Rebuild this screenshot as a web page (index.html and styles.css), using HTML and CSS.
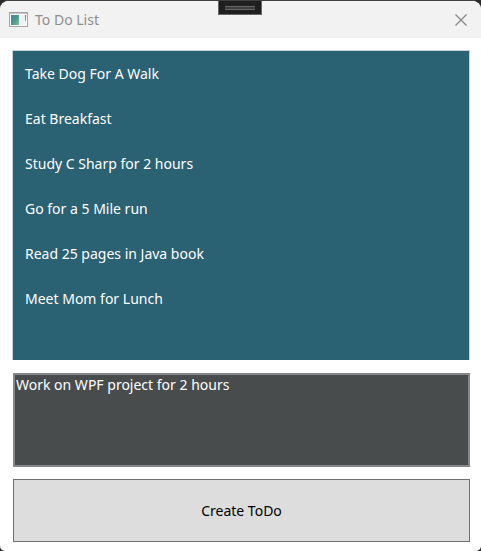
FILE: index.html
```html
<!DOCTYPE html>
<html lang="en">
<head>
<meta charset="utf-8">
<meta name="viewport" content="width=device-width, initial-scale=1">
<title>To Do List</title>
<link rel="stylesheet" href="styles.css">
</head>
<body>
<div class="window">
  <header class="titlebar">
    <svg class="app-icon" width="19" height="15" viewBox="0 0 19 15" aria-hidden="true">
      <defs>
        <linearGradient id="pane" x1="0" y1="0" x2="1" y2="1">
          <stop offset="0" stop-color="#4a7fae"/>
          <stop offset="0.5" stop-color="#4c9a90"/>
          <stop offset="1" stop-color="#7dbd92"/>
        </linearGradient>
        <linearGradient id="strip" x1="0" y1="0" x2="0" y2="1">
          <stop offset="0" stop-color="#4a80c0"/>
          <stop offset="1" stop-color="#75bd80"/>
        </linearGradient>
      </defs>
      <rect x="0.5" y="0.5" width="18" height="14" fill="#fafafa" stroke="#a5a7aa"/>
      <path d="M1 1.5h17" stroke="#c2c6ca"/>
      <rect x="2" y="3" width="8" height="10" fill="url(#pane)"/>
      <rect x="11" y="3" width="5" height="10" fill="#eff0f1"/>
      <path d="M16 3h1v6h-1z" fill="url(#strip)"/>
    </svg>
    <h1 class="title">To Do List</h1>
    <button class="close" type="button" aria-label="Close">
      <svg width="12" height="12" viewBox="0 0 12 12" aria-hidden="true">
        <path d="M0.5 0.5l11 11M11.5 0.5l-11 11" stroke="#858585" stroke-width="1.2" fill="none"/>
      </svg>
    </button>
    <div class="grip"><span class="grip-bar"></span></div>
  </header>
  <main class="content">
    <ul class="todos">
      <li>Take Dog For A Walk</li>
      <li>Eat Breakfast</li>
      <li>Study C Sharp for 2 hours</li>
      <li>Go for a 5 Mile run</li>
      <li>Read 25 pages in Java book</li>
      <li>Meet Mom for Lunch</li>
    </ul>
    <textarea class="entry" aria-label="New to do" spellcheck="false">Work on WPF project for 2 hours</textarea>
    <button class="create" type="button">Create ToDo</button>
  </main>
</div>
</body>
</html>
```
FILE: styles.css
```css
* {
  box-sizing: border-box;
}

body {
  margin: 0;
  background: #2b292b;
  font-family: "Noto Sans", "Open Sans", sans-serif;
  font-size: 14px;
  line-height: 20px;
}

button,
textarea {
  font: inherit;
}

.window {
  display: flex;
  flex-direction: column;
  min-height: 100vh;
  overflow: hidden;
  border-top: 1px solid #403e40;
  border-radius: 9px 9px 5px 5px;
  background: #fff;
}

.titlebar {
  position: relative;
  display: flex;
  align-items: center;
  height: 37px;
  padding: 0 14px 0 9px;
  background: #f2f2f2;
}

.app-icon {
  flex: none;
}

.title {
  flex: 1;
  margin: 0 0 0 7px;
  color: #8e8e8e;
  font-size: 14px;
  font-weight: 400;
}

.close {
  display: flex;
  padding: 0;
  border: 0;
  background: none;
}

.grip {
  position: absolute;
  top: -1px;
  left: 50%;
  display: flex;
  align-items: center;
  justify-content: center;
  width: 44px;
  height: 15px;
  margin-left: -23px;
  border: 1px solid #686868;
  background: #1f1f1f;
}

.grip-bar {
  width: 30px;
  height: 4px;
  border: solid #686868;
  border-width: 1px 0;
  background: #3d3d3d;
}

.content {
  display: flex;
  flex: 1;
  flex-direction: column;
  gap: 13px;
  padding: 12px 11px 9px 12px;
}

.todos {
  flex: 1;
  margin: 0;
  padding: 0;
  border: 1px solid #c3d3d9;
  border-bottom-width: 0;
  background: #2a6173;
  color: #fff;
  list-style: none;
}

.todos li {
  padding: 13px 12px 12px;
}

.entry {
  display: block;
  height: 94px;
  margin-left: 1px;
  padding: 0 1px;
  border: 2px solid #85888a;
  border-radius: 0;
  outline: 0;
  background: #484c4c;
  color: #fff;
  resize: none;
}

.create {
  height: 63px;
  margin: -1px 0 0 1px;
  padding: 0;
  border: 1px solid #707070;
  border-radius: 0;
  background: #ddd;
  color: #000;
}
```
